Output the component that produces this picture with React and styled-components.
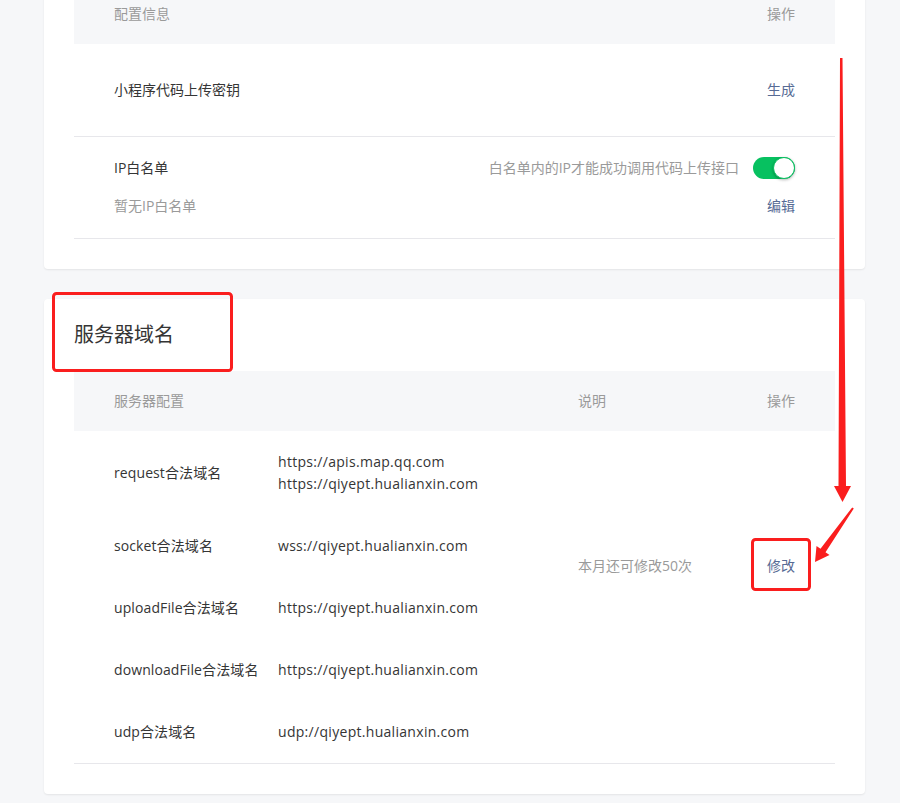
import React from 'react'
import styled, { createGlobalStyle } from 'styled-components'

const GlobalStyle = createGlobalStyle`
  body {
    margin: 0;
    background: #f6f7f9;
    font-family: "Open Sans", "Noto Sans CJK SC", sans-serif;
    font-size: 14px;
    color: #353535;
  }
`

const Root = styled.div`
  position: relative;
  width: 900px;
  height: 803px;
  overflow: hidden;
`

const Page = styled.div`
  display: flex;
  flex-direction: column;
  gap: 30px;
  padding: 0 35px 9px 44px;
  margin-top: -16px;
`

const Card = styled.div`
  background: #fff;
  border-radius: 4px;
  box-shadow: 0 1px 2px rgba(0, 0, 0, 0.08);
  padding: 0 30px 30px;
`

const CardTitle = styled.h3`
  margin: 0;
  padding: 22px 0;
  font-size: 20px;
  line-height: 28px;
  font-weight: 400;
  color: #353535;
`

const HeadRow = styled.div`
  display: grid;
  grid-template-columns: ${p => p.$cols};
  align-items: center;
  height: 60px;
  padding: 0 40px;
  background: #f6f7f9;
  color: #9a9a9a;
  line-height: 22px;
`

const Row = styled.div`
  display: flex;
  align-items: center;
  justify-content: space-between;
  min-height: 92px;
  padding: 0 40px;
  border-bottom: 1px solid #e7e7eb;
  line-height: 22px;
`

const StackRow = styled.div`
  display: flex;
  flex-direction: column;
  gap: 16px;
  padding: 20px 40px 21px;
  border-bottom: 1px solid #e7e7eb;
  line-height: 22px;
`

const Line = styled.div`
  display: flex;
  align-items: center;
  justify-content: space-between;
`

const Muted = styled.span`
  color: #9a9a9a;
`

const Side = styled.div`
  display: flex;
  align-items: center;
  gap: 14px;
`

const Link = styled.a`
  color: #576b95;
  text-decoration: none;
  cursor: pointer;
`

const Toggle = styled.span`
  position: relative;
  display: inline-block;
  width: 42px;
  height: 22px;
  border-radius: 11px;
  background: #07c160;
  &::after {
    content: '';
    position: absolute;
    top: 0;
    right: 0;
    width: 22px;
    height: 22px;
    border-radius: 50%;
    background: #fff;
    box-shadow: 0 1px 3px rgba(0, 0, 0, 0.3);
    box-sizing: border-box;
    border: 1px solid #07c160;
  }
`

const Body = styled.div`
  display: grid;
  grid-template-columns: ${p => p.$cols};
  row-gap: 40px;
  padding: 20px 40px;
  border-bottom: 1px solid #e7e7eb;
  line-height: 22px;
`

const Label = styled.div`
  color: #353535;
  white-space: nowrap;
  letter-spacing: 0.1px;
`

const Value = styled.div`
  color: #353535;
  display: flex;
  flex-direction: column;
  letter-spacing: 0.3px;
`

const SpanCell = styled.div`
  grid-column: ${p => p.$col};
  grid-row: 1 / 5;
  align-self: center;
  color: ${p => (p.$muted ? '#9a9a9a' : 'inherit')};
`

const Overlay = styled.svg`
  position: absolute;
  left: 0;
  top: 0;
  pointer-events: none;
`

const cols = '164px 300px 1fr auto'

const domains = [
  { label: 'request合法域名', values: ['https://apis.map.qq.com', 'https://qiyept.hualianxin.com'] },
  { label: 'socket合法域名', values: ['wss://qiyept.hualianxin.com'] },
  { label: 'uploadFile合法域名', values: ['https://qiyept.hualianxin.com'] },
  { label: 'downloadFile合法域名', values: ['https://qiyept.hualianxin.com'] },
  { label: 'udp合法域名', values: ['udp://qiyept.hualianxin.com'] },
]

const App = () => {
  return (
    <Root>
      <GlobalStyle />
      <Page>
        <Card>
          <HeadRow $cols="1fr auto">
            <span>配置信息</span>
            <span>操作</span>
          </HeadRow>
          <Row>
            <span>小程序代码上传密钥</span>
            <Link>生成</Link>
          </Row>
          <StackRow>
            <Line>
              <span>IP白名单</span>
              <Side>
                <Muted>白名单内的IP才能成功调用代码上传接口</Muted>
                <Toggle />
              </Side>
            </Line>
            <Line>
              <Muted>暂无IP白名单</Muted>
              <Link>编辑</Link>
            </Line>
          </StackRow>
        </Card>

        <Card>
          <CardTitle>服务器域名</CardTitle>
          <HeadRow $cols={cols}>
            <span>服务器配置</span>
            <span />
            <span>说明</span>
            <span>操作</span>
          </HeadRow>
          <Body $cols={cols}>
            {domains.map((d, i) => (
              <React.Fragment key={d.label}>
                <Label style={{ gridRow: i + 1, gridColumn: 1, alignSelf: 'center' }}>{d.label}</Label>
                <Value style={{ gridRow: i + 1, gridColumn: 2 }}>
                  {d.values.map(v => (
                    <span key={v}>{v}</span>
                  ))}
                </Value>
              </React.Fragment>
            ))}
            <SpanCell $col={3} $muted>本月还可修改50次</SpanCell>
            <SpanCell $col={4}>
              <Link>修改</Link>
            </SpanCell>
          </Body>
        </Card>
      </Page>

      <Overlay width="900" height="803" viewBox="0 0 900 803">
        <rect x="53.5" y="293.5" width="178" height="77" rx="3" fill="none" stroke="#fa1e1e" strokeWidth="3" />
        <rect x="752.5" y="539.5" width="57" height="50" rx="3" fill="none" stroke="#fa1e1e" strokeWidth="3" />
        <polygon
          points="840,58 842.5,58 846,486 851,486 842.5,502 834,486 838.5,486"
          fill="#fa1e1e"
        />
        <polygon
          points="852.2,507.4 853.8,508.6 825.5,552.2 829.5,555.1 815,562 816.5,545.9 820.5,548.8"
          fill="#fa1e1e"
        />
      </Overlay>
    </Root>
  )
}

export default App
